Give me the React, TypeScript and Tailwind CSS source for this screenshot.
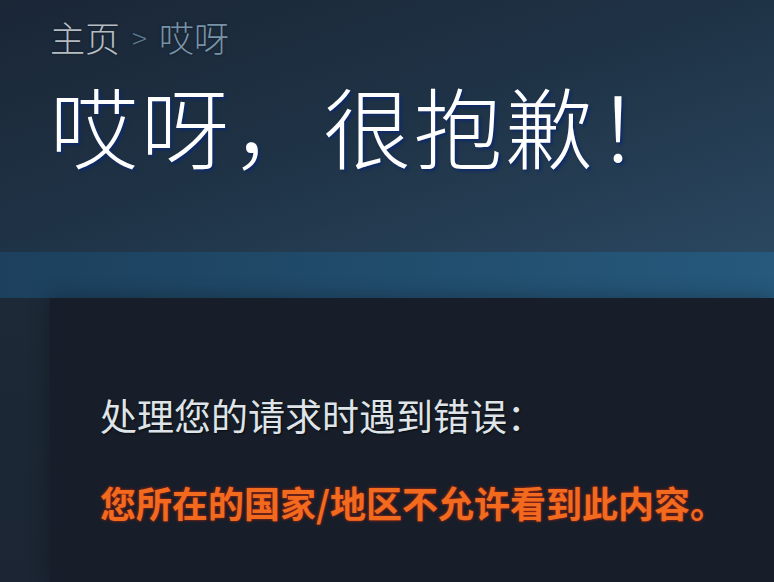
export default function App() {
  return (
    <div
      className="w-[774px] h-[582px] overflow-hidden flex flex-col bg-[#1a2230]"
      style={{ fontFamily: '"Noto Sans CJK SC", "Noto Sans", sans-serif' }}
    >
      {/* Page header */}
      <div className="h-[252px] shrink-0 bg-gradient-to-br from-[#1a2636] via-[#1f3346] to-[#2a4760] px-[50px] pt-[19px]">
        <div className="flex items-center gap-[12px] text-[35px] leading-[36px] font-light [text-shadow:0_0_3px_rgba(0,0,0,0.4)]">
          <span className="text-[#b5bcc2]">主页</span>
          <span className="text-[#5d7a90] text-[28px]">&gt;</span>
          <span className="text-[#7893a7]">哎呀</span>
        </div>
        <h1 className="mt-[25px] text-[88px] leading-[88px] font-light text-white tracking-[3px] [text-shadow:2px_2px_3px_#0d2a6a]">
          哎呀，很抱歉！
        </h1>
      </div>

      {/* Blue band */}
      <div className="h-[46px] shrink-0 bg-gradient-to-r from-[#1c405d] to-[#26597c]" />

      {/* Error panel */}
      <div className="flex-1 flex bg-gradient-to-b from-[#1d2937] to-[#1b2533]">
        <div className="w-[50px] shrink-0" />
        <div className="flex-1 bg-[#171e29] shadow-[0_0_20px_rgba(0,0,0,0.3)] pl-[50px] pt-[94px]">
          <p className="text-[37px] leading-[46px] text-[#dfe4e8] [text-shadow:1px_1px_2px_rgba(0,0,0,0.6)]">
            处理您的请求时遇到错误：
          </p>
          <p className="mt-[41px] text-[36px] leading-[46px] font-bold text-[#f26a1e] [text-shadow:0_0_3px_#c0260c]">
            您所在的国家/地区不允许看到此内容。
          </p>
        </div>
      </div>
    </div>
  );
}
